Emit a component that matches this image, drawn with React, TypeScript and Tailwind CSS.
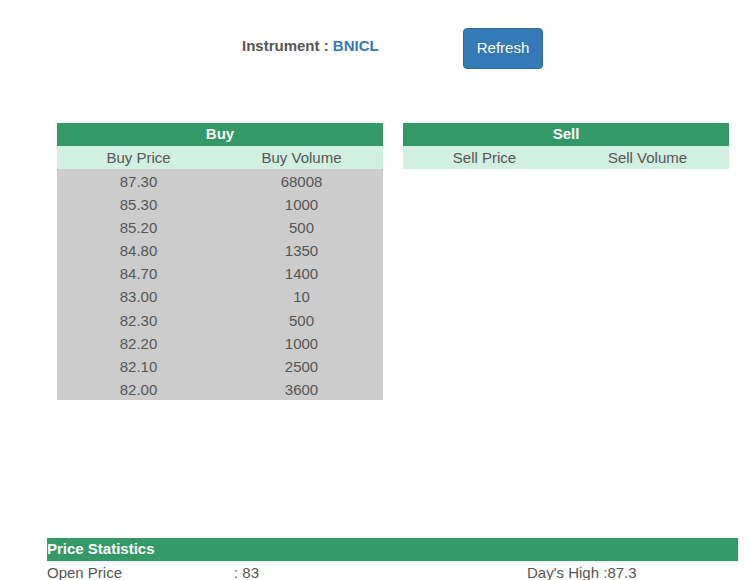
import React from "react";

const buys = [
  ["87.30", "68008"],
  ["85.30", "1000"],
  ["85.20", "500"],
  ["84.80", "1350"],
  ["84.70", "1400"],
  ["83.00", "10"],
  ["82.30", "500"],
  ["82.20", "1000"],
  ["82.10", "2500"],
  ["82.00", "3600"],
];

export default function App() {
  return (
    <div
      className="w-[749px] h-[580px] overflow-hidden bg-white text-[#555] text-[15px]"
      style={{ fontFamily: '"Liberation Sans", Arial, sans-serif' }}
    >
      <div className="flex items-start pt-[28px] pl-[242px]">
        <div className="w-[221px] font-bold text-[15px] leading-[20px] mt-[8px]">
          Instrument : <span className="text-[#337ab7]">BNICL</span>
        </div>
        <button className="w-[80px] h-[41px] rounded-[4px] bg-[#337ab7] text-white text-[15px] border border-[#2e6da4]">
          Refresh
        </button>
      </div>

      <div className="flex gap-[20px] pl-[57px] mt-[54px]">
        <div className="w-[326px]">
          <div className="h-[23px] bg-[#339966] text-white font-bold flex items-center justify-center">
            Buy
          </div>
          <div className="grid grid-cols-2 h-[23px] bg-[#d1f0e1] items-center text-center pt-[1px]">
            <div>Buy Price</div>
            <div>Buy Volume</div>
          </div>
          <div className="bg-[#cccccc]">
            {buys.map(([p, v]) => (
              <div key={p + v} className="grid grid-cols-2 h-[23.1px] items-center text-center pt-[2px]">
                <div>{p}</div>
                <div>{v}</div>
              </div>
            ))}
          </div>
        </div>
        <div className="w-[326px]">
          <div className="h-[23px] bg-[#339966] text-white font-bold flex items-center justify-center">
            Sell
          </div>
          <div className="grid grid-cols-2 h-[23px] bg-[#d1f0e1] items-center text-center pt-[1px]">
            <div>Sell Price</div>
            <div>Sell Volume</div>
          </div>
        </div>
      </div>

      <div className="ml-[47px] w-[691px] mt-[138px]">
        <div className="h-[23px] bg-[#339966] text-white font-bold flex items-center">
          Price Statistics
        </div>
        <div className="flex h-[23px] items-center pt-[1px]">
          <div className="w-[187px]">Open Price</div>
          <div className="w-[293px]">: 83</div>
          <div>Day's High :87.3</div>
        </div>
      </div>
    </div>
  );
}
